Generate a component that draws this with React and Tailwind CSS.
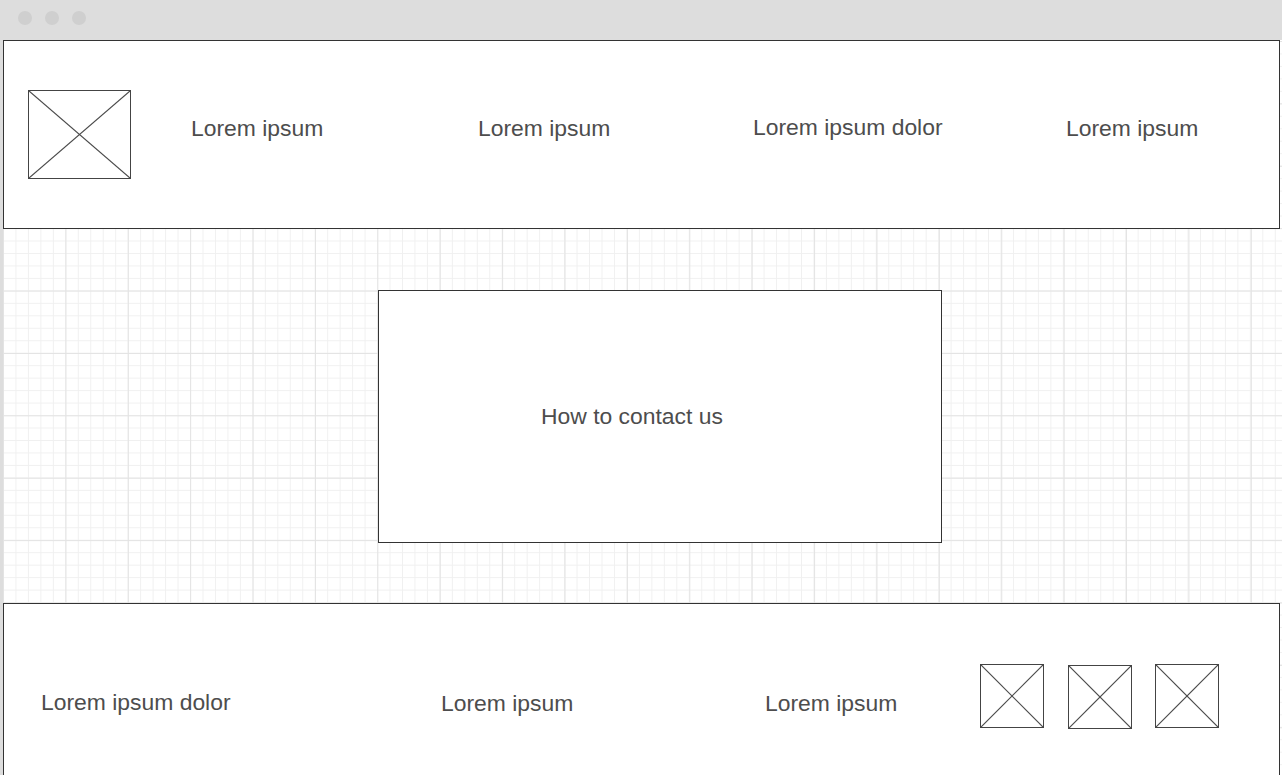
import React from 'react';

const Placeholder = ({ className }) => (
    <div className={`border border-[#444] bg-white flex-shrink-0 ${className}`}>
        <svg className="w-full h-full block" viewBox="0 0 100 100" preserveAspectRatio="none">
            <line x1="0" y1="0" x2="100" y2="100" stroke="#4a4a4a" strokeWidth="1.2" vectorEffect="non-scaling-stroke" />
            <line x1="100" y1="0" x2="0" y2="100" stroke="#4a4a4a" strokeWidth="1.2" vectorEffect="non-scaling-stroke" />
        </svg>
    </div>
);

const Label = ({ children, className = '' }) => (
    <span className={`block whitespace-nowrap text-[22.9px] leading-[26px] text-[#4d4d4d] ${className}`}>
        {children}
    </span>
);

export default function App() {
    return (
        <div className="w-[1282px] h-[775px] overflow-hidden bg-[#dddddd] font-['Liberation_Sans',Arial,sans-serif]">
            {/* Window chrome */}
            <div className="h-[40px] flex items-center gap-[13px] pl-[18px] pb-[4px]">
                <span className="w-[14px] h-[14px] rounded-full bg-[#cfcfcf]"></span>
                <span className="w-[14px] h-[14px] rounded-full bg-[#cfcfcf]"></span>
                <span className="w-[14px] h-[14px] rounded-full bg-[#cfcfcf]"></span>
            </div>

            {/* Canvas */}
            <div className="ml-[3px] h-[735px] flex flex-col bg-white bg-[linear-gradient(to_right,#e3e3e3_1px,transparent_1px),linear-gradient(to_bottom,#e3e3e3_1px,transparent_1px),linear-gradient(to_right,#f0f0f0_1px,transparent_1px),linear-gradient(to_bottom,#f0f0f0_1px,transparent_1px)] bg-[length:62.4px_62.4px,62.4px_62.4px,12.48px_12.48px,12.48px_12.48px] bg-[position:0px_1px]">
                {/* Header */}
                <header className="w-[1277px] h-[189px] flex-shrink-0 border border-[#333] bg-white flex items-start">
                    <Placeholder className="ml-[24px] mt-[49px] w-[103px] h-[89px]" />
                    <div className="ml-[60px] mt-[74px] w-[287px]"><Label>Lorem ipsum</Label></div>
                    <div className="mt-[74px] w-[275px]"><Label>Lorem ipsum</Label></div>
                    <div className="mt-[73px] w-[313px]"><Label>Lorem ipsum dolor</Label></div>
                    <div className="mt-[74px]"><Label>Lorem ipsum</Label></div>
                </header>

                {/* Content */}
                <main className="flex-1 pt-[61px]">
                    <div className="ml-[375px] w-[564px] h-[253px] border border-[#333] bg-white">
                        <Label className="ml-[162px] mt-[112px]">How to contact us</Label>
                    </div>
                </main>

                {/* Footer */}
                <footer className="w-[1277px] h-[172px] flex-shrink-0 border border-[#333] border-b-0 bg-white flex items-start">
                    <div className="ml-[37px] mt-[85px] w-[400px]"><Label>Lorem ipsum dolor</Label></div>
                    <div className="mt-[86px] w-[324px]"><Label>Lorem ipsum</Label></div>
                    <div className="mt-[86px] w-[215px]"><Label>Lorem ipsum</Label></div>
                    <Placeholder className="mt-[60px] w-[64px] h-[64px]" />
                    <Placeholder className="ml-[24px] mt-[61px] w-[64px] h-[64px]" />
                    <Placeholder className="ml-[23px] mt-[60px] w-[64px] h-[64px]" />
                </footer>
            </div>
        </div>
    );
}
